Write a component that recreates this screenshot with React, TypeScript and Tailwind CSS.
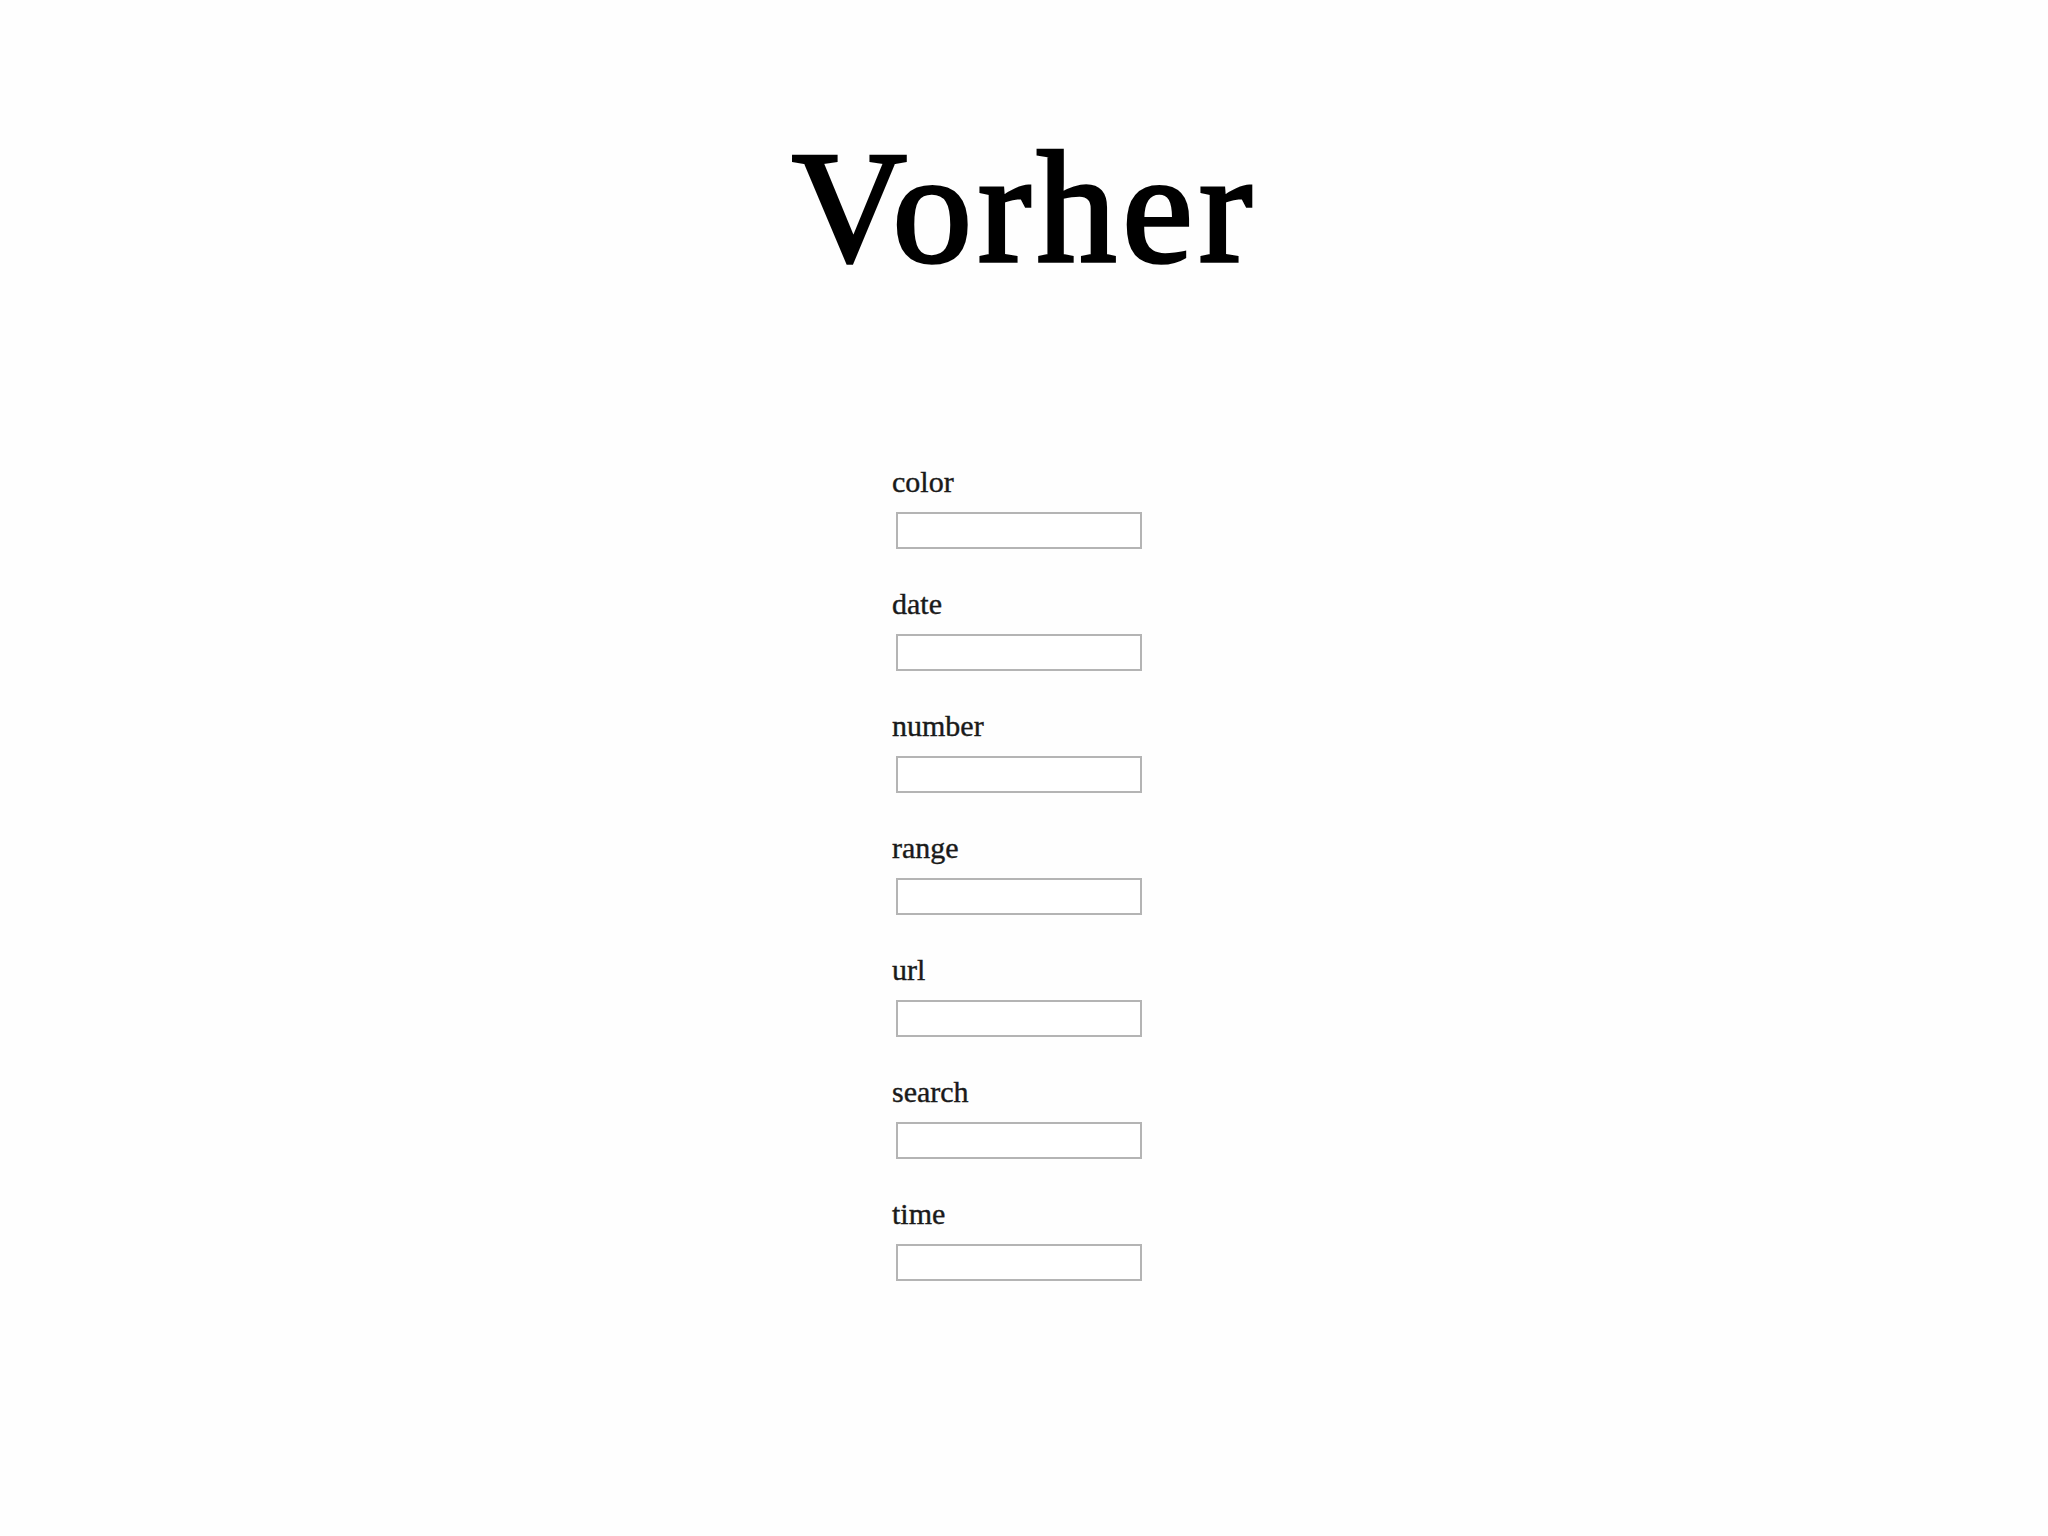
const fields = ['color', 'date', 'number', 'range', 'url', 'search', 'time'];

export default function App() {
  return (
    <div className="min-h-screen w-full bg-[#fefefe] font-['Liberation_Serif',serif] text-[#111]">
      {/* page heading */}
      <div className="flex justify-center pt-[128px] pl-[2px]">
        <h1 className="text-[159px] leading-none tracking-[6px] text-black [-webkit-text-stroke:3.5px_#000]">Vorher</h1>
      </div>

      {/* plain inputs, one per type */}
      <form className="mx-auto mt-[177px] flex w-[264px] flex-col gap-[37px]">
        {fields.map((name) => (
          <div key={name} className="flex flex-col">
            <label htmlFor={name} className="h-[36px] text-[30px] leading-[36px] text-[#1a1a1a] [-webkit-text-stroke:0.4px_#1a1a1a]">
              {name}
            </label>
            <input
              id={name}
              type="text"
              className="mt-3 ml-1 h-[37px] w-[246px] border-2 border-[#b4b4b4] bg-white outline-none"
            />
          </div>
        ))}
      </form>
    </div>
  );
}
